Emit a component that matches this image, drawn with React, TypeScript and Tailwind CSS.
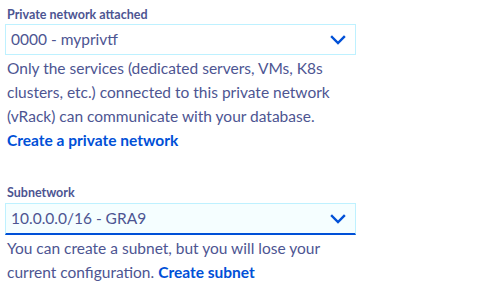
import React from "react";

function Chevron() {
  return (
    <svg width="16" height="10" viewBox="0 0 16 10" fill="none">
      <path d="M2 2 L8 8 L14 2" stroke="#0050d7" strokeWidth="2.4" strokeLinecap="square" />
    </svg>
  );
}

export default function App() {
  return (
    <div className="w-[504px] h-[288px] bg-white pl-[5px] pt-[7px] text-[#4d5592]" style={{ fontFamily: '"Lato", "Noto Sans", sans-serif' }}>
      <div className="w-[351px]">
        <div className="pl-[2px] text-[12.5px] font-bold leading-[16px] h-[17px]">Private network attached</div>
        <div className="h-[31px] border border-[#bef1ff] bg-white flex items-center justify-between pl-[5px] pr-[9px]">
          <span className="text-[15.5px]">0000 - myprivtf</span>
          <Chevron />
        </div>
        <div className="pl-[2px] text-[15.5px] leading-[24px] mt-[1px]">
          Only the services (dedicated servers, VMs, K8s clusters, etc.) connected to this private network (vRack) can communicate with your database.
          <div><span className="font-bold text-[#0050d7]">Create a private network</span></div>
        </div>
        <div className="pl-[2px] text-[12.5px] font-bold leading-[16px] h-[18px] mt-[33px]">Subnetwork</div>
        <div className="h-[32px] border border-[#bef1ff] border-b-2 border-b-[#0050d7] bg-[#f5feff] flex items-center justify-between pl-[5px] pr-[9px]">
          <span className="text-[15.5px]">10.0.0.0/16 - GRA9</span>
          <Chevron />
        </div>
        <div className="pl-[2px] text-[15.5px] leading-[24px] mt-[1px]">
          You can create a subnet, but you will lose your current configuration.{" "}
          <span className="font-bold text-[#0050d7]">Create subnet</span>
        </div>
      </div>
    </div>
  );
}
